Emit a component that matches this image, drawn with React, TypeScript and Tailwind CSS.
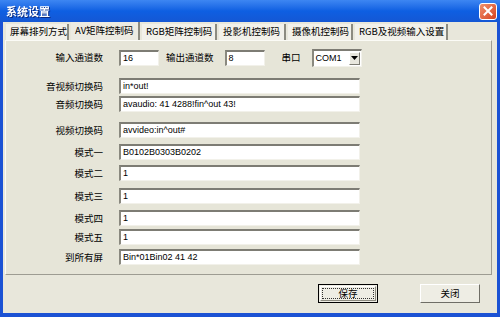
const sans = { fontFamily: '"Liberation Sans", "Noto Sans CJK SC", sans-serif' }
const cjk = { fontFamily: '"Noto Sans CJK SC", "Liberation Sans", sans-serif' }

const tabs = [
  { label: "屏幕排列方式", w: 63 },
  { label: "AV矩阵控制码", w: 69, active: true },
  { label: "RGB矩阵控制码", w: 75 },
  { label: "投影机控制码", w: 67 },
  { label: "摄像机控制码", w: 65 },
  { label: "RGB及视频输入设置", w: 93 },
]

const rows = [
  { label: "音视频切换码", value: "in*out!", mt: "mt-[12px]" },
  { label: "音频切换码", value: "avaudio: 41 4288!fin^out 43!", mt: "mt-[2px]" },
  { label: "视频切换码", value: "avvideo:in^out#", mt: "mt-[10px]" },
  { label: "模式一", value: "B0102B0303B0202", mt: "mt-[6px]" },
  { label: "模式二", value: "1", mt: "mt-[5px]" },
  { label: "模式三", value: "1", mt: "mt-[7px]" },
  { label: "模式四", value: "1", mt: "mt-[6px]" },
  { label: "模式五", value: "1", mt: "mt-[3px]" },
  { label: "到所有屏", value: "Bin*01Bin02 41 42", mt: "mt-[4px]" },
]

function Field({ value, w }: { value: string; w: string }) {
  return (
    <div
      className={`${w} h-[16px] bg-white border-t-2 border-l-2 border-r border-b border-t-[#7d7c74] border-l-[#8a897f] border-r-[#f2f1ea] border-b-[#f2f1ea] flex items-center pl-[2px] text-[9px] leading-none text-black`}
      style={sans}
    >
      {value}
    </div>
  )
}

export default function App() {
  return (
    <div className="w-[500px] h-[317px] bg-[#1b52d4] flex flex-col overflow-hidden">
      {/* title bar */}
      <div className="h-[22px] shrink-0 flex items-center justify-between bg-gradient-to-b from-[#3d86f2] via-[#0e5fe2] to-[#1457d4] pl-[6px] pr-[3px]">
        <span className="text-white font-bold text-[11px] leading-none drop-shadow-[1px_1px_0_#0a2a80]" style={cjk}>
          系统设置
        </span>
        <div className="w-[18px] h-[17px] rounded-[3px] border border-white bg-gradient-to-br from-[#f0906c] to-[#d4401c] flex items-center justify-center">
          <svg width="10" height="10" viewBox="0 0 10 10">
            <path d="M1.5 1.5 L8.5 8.5 M8.5 1.5 L1.5 8.5" stroke="white" strokeWidth="2" strokeLinecap="square" />
          </svg>
        </div>
      </div>

      {/* body */}
      <div className="flex-1 mx-[3px] mb-[4px] bg-[#e8e7db] flex flex-col">
        {/* tabs */}
        <div className="flex pl-[3px] pt-[2px] h-[18px] items-end" style={cjk}>
          {tabs.map((t) => (
            <div
              key={t.label}
              className={`h-[16px] mr-[2px] flex items-center pl-[4px] border-r-2 border-r-[#8c8b80] text-[9.5px] leading-none text-black whitespace-nowrap ${
                t.active ? "bg-[#ecebe2] h-[18px]" : "bg-[#f2f1ea]"
              }`}
              style={{ width: t.w }}
            >
              {t.label}
            </div>
          ))}
        </div>

        {/* panel */}
        <div className="ml-[2px] w-[487px] h-[235px] bg-[#e6e5d8] border-t border-l border-t-[#fbfbf6] border-l-[#fbfbf6] border-r border-b border-r-[#9d9c92] border-b-[#9d9c92] flex flex-col text-[9.5px] text-black" style={cjk}>
          <div className="flex items-center mt-[8px] h-[17px]">
            <span className="w-[97px] text-right">输入通道数</span>
            <div className="ml-[16px]">
              <Field value="16" w="w-[40px]" />
            </div>
            <span className="ml-[7px]">输出通道数</span>
            <div className="ml-[11px]">
              <Field value="8" w="w-[40px]" />
            </div>
            <span className="ml-[17px]">串口</span>
            <div className="ml-[11px] w-[50px] h-[18px] bg-white border-t-2 border-l-2 border-r border-b border-t-[#7d7c74] border-l-[#8a897f] border-r-[#f2f1ea] border-b-[#f2f1ea] flex items-center justify-between">
              <span className="pl-[2px] text-[9px] leading-none" style={sans}>COM1</span>
              <div className="w-[11px] h-[13px] mr-[1px] bg-[#e8e7de] border border-t-white border-l-white border-r-[#7d7c74] border-b-[#7d7c74] flex items-center justify-center">
                <svg width="7" height="4" viewBox="0 0 7 4">
                  <path d="M0 0 H7 L3.5 4 Z" fill="#000" />
                </svg>
              </div>
            </div>
          </div>

          {rows.map((r) => (
            <div key={r.label} className={`flex items-center h-[16px] ${r.mt}`}>
              <span className="w-[97px] text-right whitespace-nowrap">{r.label}</span>
              <div className="ml-[16px]">
                <Field value={r.value} w="w-[241px]" />
              </div>
            </div>
          ))}
        </div>

        {/* buttons */}
        <div className="flex-1 flex items-start justify-end pt-[9px] pr-[17px] gap-[42px]" style={cjk}>
          <div className="w-[60px] h-[19px] border border-black bg-[#eeede4] p-[1px]">
            <div className="w-full h-full border border-t-white border-l-white border-r-[#8c8b80] border-b-[#8c8b80] flex items-center justify-center">
              <div className="w-[52px] h-[11px] border border-dotted border-[#333] flex items-center justify-center text-[9.5px] leading-none">
                保存
              </div>
            </div>
          </div>
          <div className="w-[60px] h-[19px] border border-t-white border-l-white border-r-[#6f6e66] border-b-[#6f6e66] bg-[#eeede4] flex items-center justify-center text-[9.5px] leading-none">
            关闭
          </div>
        </div>
      </div>
    </div>
  )
}
